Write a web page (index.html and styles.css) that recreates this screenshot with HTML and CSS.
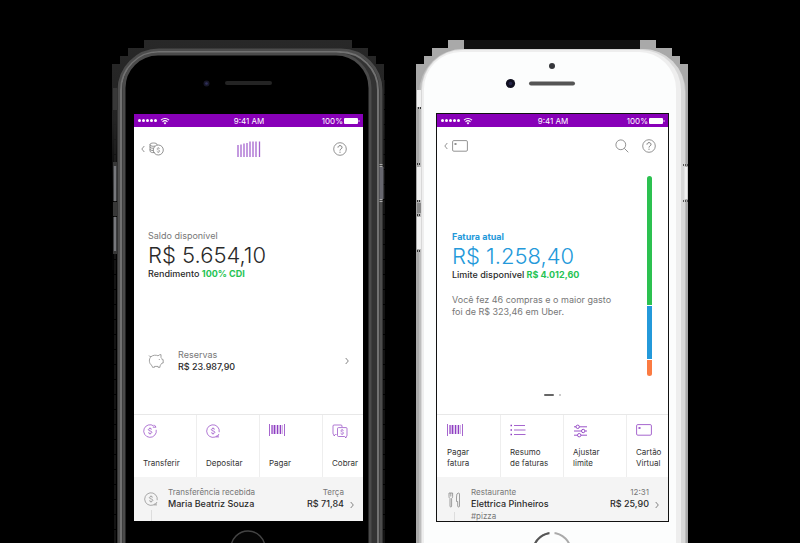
FILE: index.html
```html
<!DOCTYPE html>
<html lang="pt-BR">
<head>
<meta charset="utf-8">
<title>Conta e cartão</title>
<link rel="stylesheet" href="styles.css">
</head>
<body>
<svg class="defs" aria-hidden="true">
  <defs>
    <symbol id="wifi" viewBox="0 0 10 8"><path d="M1 3.2a5.7 5.7 0 0 1 8 0M2.5 4.8a3.6 3.6 0 0 1 5 0" fill="none" stroke="currentColor" stroke-width="1.1"/><path d="M3.6 6 5 7.5 6.4 6a2 2 0 0 0-2.8 0z" fill="currentColor"/></symbol>
    <symbol id="battery" viewBox="0 0 16 6"><rect width="14" height="6" rx="1" fill="currentColor"/><path d="M14.6 2v2q1 0 1-1t-1-1z" fill="currentColor"/></symbol>
    <symbol id="back" viewBox="0 0 4 8"><path d="M3.3 1 .8 4l2.500 3" fill="none" stroke="currentColor" stroke-width=".8"/></symbol>
    <symbol id="next" viewBox="0 0 4 8"><path d="M.7 1 3.300 4 .7 7" fill="none" stroke="currentColor" stroke-width=".9"/></symbol>
    <symbol id="help" viewBox="0 0 14 14"><circle cx="7" cy="7" r="6.300" fill="none" stroke="currentColor" stroke-width=".8"/><path d="M5 5.600c0-2.700 4-2.500 4-.2C9 7 7 6.900 7 8.500M7 9.700v1.100" fill="none" stroke="currentColor" stroke-width="1"/></symbol>
    <symbol id="dollar" viewBox="0 0 6 8"><path d="M4.900 2.500C4.500 1.300 1.300 1.300 1.300 2.700 1.300 4.200 4.900 3.600 4.900 5.300 4.900 6.700 1.500 6.700 1.100 5.400M3 .5v1.300M3 6.200v1.300" fill="none" stroke="currentColor" stroke-width=".7"/></symbol>
    <symbol id="barcode" viewBox="0 0 16 12"><path d="M.5 0v12M15.500 0v12" stroke="currentColor" stroke-width=".8"/><path d="M3 1v9M5.500 1v9M8.500 1v9M11.500 1v9" stroke="currentColor" stroke-width="1.200"/><path d="M4.100 1v9M6.800 1v9M10 1v9M13.300 1v9" stroke="currentColor" stroke-width=".5"/></symbol>
    <symbol id="card" viewBox="0 0 16 12"><rect x=".6" y=".6" width="14.800" height="10.600" rx="1.200" fill="none" stroke="currentColor" stroke-width=".8"/><path d="M2.500 3.200h2v1.600h-2z" fill="currentColor"/></symbol>
    <symbol id="deposit" viewBox="0 0 14 14"><path d="M11.600 11.400A6.300 6.300 0 1 1 13.200 8.200M9.800 12.900h3.200M12.900 10l-1.300 2.600" fill="none" stroke="currentColor" stroke-width=".7"/><use href="#dollar" x="4" y="3" width="6" height="8"/></symbol>
  </defs>
</svg>

<main class="stage">
  <section class="phone phone-dark" aria-label="Conta">
    <svg class="shell" viewBox="0 0 276 503" aria-hidden="true">
      <defs>
        <linearGradient id="fade" x1="0" y1="0" x2="0" y2="1"><stop offset="0" stop-color="#282828"/><stop offset=".35" stop-color="#222"/><stop offset=".65" stop-color="#030303"/></linearGradient>
      </defs>
      <path d="M32 0H240V8H256V16H264V24H272V230H0V24H8V16H16V8H32Z" fill="url(#fade)"/>
      <path d="M3 40V503M272 40V503" stroke="#262626" stroke-width="1" stroke-dasharray="14 1"/>
      <rect x="5" y="9" width="266" height="540" rx="42" fill="#1b1b1b"/>
      <rect x="7" y="10" width="262" height="540" rx="40" fill="#333" stroke="#4d4d4d" stroke-width="3"/>
      <rect x="9" y="12" width="257" height="540" rx="38" fill="none" stroke="#727272" stroke-width="2"/>
      <rect x="12" y="14" width="246" height="540" rx="34" fill="#000" stroke="#4b4b4b" stroke-width="3"/>
      <path d="M3 126v35M3 177v34" stroke="#77787c" stroke-width="3"/>
      <path d="M3 48v22M3 122v4M3 162v14M3 211v3" stroke="#383838" stroke-width="4"/>
      <path d="M269.500 127v32" stroke="#66666e" stroke-width="4"/>
      <path d="M269 124v3M269 159v3" stroke="#aaa" stroke-width="3" stroke-dasharray="1 1"/>
      <circle cx="94.500" cy="43.500" r="3" fill="#171728"/><circle cx="94.500" cy="43.500" r="1.300" fill="#30305c"/>
      <path d="M115 43h43" stroke="#242424" stroke-width="4" stroke-linecap="round"/>
      <circle cx="136" cy="508" r="17" fill="#050505" stroke="#444" stroke-width="1.500"/>
    </svg>
    <div class="screen">
      <div class="status">
        <span class="signal"><i></i><i></i><i></i><i></i><i></i><svg class="wifi"><use href="#wifi"/></svg></span>
        <span>9:41 AM</span>
        <span class="power">100%<svg class="battery"><use href="#battery"/></svg></span>
      </div>
      <header class="bar">
        <button class="icon-button" aria-label="Voltar"><svg class="chevron"><use href="#back"/></svg>
          <svg width="15" height="14" viewBox="0 0 15 14" fill="none" stroke="#777" stroke-width=".8"><path d="M5.500 10.500C3 11 1 10 1 9V2.500C1 .5 8 .5 8 2.500V3M1 2.500c0 2 4 2 5 1.500M1 4.700c0 1.300 2 1.600 3.400 1.500M1 7c0 1.200 1.500 1.500 3 1.500"/><circle cx="9.300" cy="8" r="5"/><use href="#dollar" x="6.800" y="4.800" width="5" height="6.500" color="#777"/></svg>
        </button>
        <svg class="bars" width="24" height="16" viewBox="0 0 24 16" aria-hidden="true"><path d="M1 4v12M4 3.500V16M7 2.500V16M10 2V16M13 .5V16M16 .5V16M19 .5V16M22.500.5V16" stroke="#a565cf" stroke-width="1.300"/></svg>
        <button class="icon-button" aria-label="Ajuda"><svg class="round"><use href="#help"/></svg></button>
      </header>
      <div class="balance">
        <p class="muted">Saldo disponível</p>
        <p class="amount">R$ 5.654,10</p>
        <p class="strong">Rendimento <b class="green">100% CDI</b></p>
      </div>
      <a class="reserve" href="#reservas">
        <svg width="16" height="16" viewBox="0 0 16 16" fill="none" stroke="#8a8a8a" stroke-width=".8" stroke-linejoin="round"><path d="M3 3.700Q1.500 3.800 1 2.500M3 3.700C5 2 8 1.800 10 2.800Q11.500 1.500 13 1.600V4.500Q14 5.500 14.200 6.700H15.200V10H14Q13.400 11.600 12 12.500V14.300H10V13.400H6.500V14.300H4.500L4 12.700C.8 10.500.6 6 3 3.700Z"/><path d="M11.300 6v1"/></svg>
        <span class="grow"><span class="muted">Reservas</span><span class="strong">R$ 23.987,90</span></span>
        <svg class="chevron"><use href="#next"/></svg>
      </a>
      <nav class="actions" aria-label="Ações da conta">
        <button><svg class="round" viewBox="0 0 14 14"><path d="M10.800 2A6.300 6.300 0 1 0 13.200 5.800M9.800 3.200h3.200M11.200.8l1.900 2.400" fill="none" stroke="currentColor" stroke-width=".7"/><use href="#dollar" x="4" y="3" width="6" height="8"/></svg><span>Transferir</span></button>
        <button><svg class="round"><use href="#deposit"/></svg><span>Depositar</span></button>
        <button><svg class="wide"><use href="#barcode"/></svg><span>Pagar</span></button>
        <button><svg width="16" height="15" viewBox="0 0 16 15" fill="none" stroke="currentColor" stroke-width=".7" stroke-linejoin="round"><path d="M4.500 10.500H3.500L2 12V10.500Q1 10.500 1 9.500V2Q1 1 2 1H9Q10 1 10 2V3"/><path d="M6.500 3.600H14Q15 3.600 15 4.600V11.500Q15 12.500 14 12.500V14L12.500 12.500H6.500Q5.500 12.500 5.500 11.500V4.600Q5.500 3.600 6.500 3.600Z"/><use href="#dollar" x="7.600" y="4.500" width="5" height="7"/></svg><span>Cobrar</span></button>
      </nav>
      <a class="entry" href="#transferencia">
        <span class="thread"><svg class="round"><use href="#deposit"/></svg></span>
        <span class="grow"><span class="muted">Transferência recebida</span><span class="strong">Maria Beatriz Souza</span></span>
        <span class="value"><span class="muted">Terça</span><span class="strong">R$ 71,84</span></span>
        <svg class="chevron"><use href="#next"/></svg>
      </a>
    </div>
  </section>

  <section class="phone phone-light" aria-label="Cartão">
    <svg class="shell" viewBox="0 0 276 503" aria-hidden="true">
      <path d="M32 0H240V8H256V16H264V24H272V503H0V24H8V16H16V8H32Z" fill="#a9a9a9"/>
      <path d="M48 0H224V9H48Z" fill="#111"/>
      <rect x="3" y="9" width="267" height="540" rx="44" fill="#bdbdbd"/>
      <rect x="5" y="9" width="264" height="540" rx="42" fill="#d8d8d8"/>
      <rect x="6" y="10" width="259" height="540" rx="40" fill="#eee"/>
      <rect x="8" y="12" width="252" height="540" rx="37" fill="#fcfdfd"/>
      <path d="M3 50v17M3 127v33M3 177v32" stroke="#f0f0f0" stroke-width="4"/>
      <path d="M2 68h3M1 124h4M1 161h4M1 175h4M1 211h4" stroke="#333" stroke-width="2" stroke-dasharray="1 1"/>
      <path d="M1 163h4v10H1z" fill="#888"/>
      <path d="M270 127v32" stroke="#f0f0f0" stroke-width="3"/>
      <path d="M267 125h5M267 161h5" stroke="#555" stroke-width="2" stroke-dasharray="1 1"/>
      <circle cx="136" cy="26" r="3" fill="#36373b"/>
      <circle cx="94.500" cy="43.500" r="4.600" fill="#101020"/><circle cx="94.500" cy="43.500" r="1.800" fill="#25254a"/>
      <path d="M115 43.500h42" stroke="#555" stroke-width="4" stroke-linecap="round"/>
      <circle cx="136" cy="512" r="19" fill="none" stroke="#aaa" stroke-width="2"/>
      <path d="M117.500 508A19 19 0 0 1 136 493" fill="none" stroke="#555" stroke-width="2"/>
      <path d="M136 491v4" stroke="#fcfdfd" stroke-width="5"/>
    </svg>
    <div class="screen">
      <div class="status">
        <span class="signal"><i></i><i></i><i></i><i></i><i></i><svg class="wifi"><use href="#wifi"/></svg></span>
        <span>9:41 AM</span>
        <span class="power">100%<svg class="battery"><use href="#battery"/></svg></span>
      </div>
      <header class="bar">
        <button class="icon-button" aria-label="Voltar"><svg class="chevron"><use href="#back"/></svg><svg class="wide"><use href="#card"/></svg></button>
        <span class="tools">
          <button class="icon-button" aria-label="Buscar"><svg class="round" viewBox="0 0 14 14" fill="none" stroke="currentColor" stroke-width=".8"><circle cx="5.800" cy="5.800" r="4.900"/><path d="m9.300 9.300 4 4"/></svg></button>
          <button class="icon-button" aria-label="Ajuda"><svg class="round"><use href="#help"/></svg></button>
        </span>
      </header>
      <div class="invoice">
        <div class="balance">
          <p class="blue"><b>Fatura atual</b></p>
          <p class="amount blue">R$ 1.258,40</p>
          <p class="strong">Limite disponível <b class="green">R$ 4.012,60</b></p>
          <p class="note">Você fez 46 compras e o maior gasto foi de R$ 323,46 em Uber.</p>
        </div>
        <div class="meter" aria-hidden="true"><i class="free"></i><i class="current"></i><i class="future"></i></div>
      </div>
      <div class="pager" aria-hidden="true"><i class="on"></i><i></i></div>
      <nav class="actions" aria-label="Ações do cartão">
        <button><svg class="wide"><use href="#barcode"/></svg><span>Pagar<br>fatura</span></button>
        <button><svg width="16" height="12" viewBox="0 0 16 12" stroke="currentColor"><path d="M4 1.500h11M4 6h11.500M4 10.500h11.500" stroke-width=".8"/><path d="M.5 1.500H2M.5 6H2M.5 10.500H2" stroke-width="1.400"/></svg><span>Resumo<br>de faturas</span></button>
        <button><svg width="15" height="14" viewBox="0 0 15 14" fill="none" stroke="currentColor" stroke-width=".9"><path d="M1 2.800h2M6.500 2.800H14M1 7h7.500M12 7h2M1 11.200h3.500M8 11.200h6"/><circle cx="4.700" cy="2.800" r="1.700"/><circle cx="10.200" cy="7" r="1.700"/><circle cx="6.200" cy="11.200" r="1.700"/></svg><span>Ajustar<br>limite</span></button>
        <button><svg class="wide"><use href="#card"/></svg><span>Cartão<br>Virtual</span></button>
      </nav>
      <a class="entry" href="#compra">
        <span class="thread"><svg width="14" height="16" viewBox="0 0 14 16" fill="none" stroke="currentColor" stroke-width=".8"><path d="M2 1v3.500Q2 6 3 6.500V14q0 1 .8 1t.8-1V6.500q1-.5 1-2V1M3.800 1v3.500M2 1h3.600M9.500 9.500V5Q9.500 1 11.200 1T12.500 3V14q0 1-.9 1t-.9-1V9.500z"/></svg></span>
        <span class="grow"><span class="muted">Restaurante</span><span class="strong">Elettrica Pinheiros</span><span class="muted">#pizza</span></span>
        <span class="value"><span class="muted">12:31</span><span class="strong">R$ 25,90</span></span>
        <svg class="chevron"><use href="#next"/></svg>
      </a>
    </div>
  </section>
</main>
</body>
</html>
```
FILE: styles.css
```css
* { box-sizing: border-box; }

body {
  margin: 0;
  background: #000;
  color: #2a2a2a;
  font: 9px/12px Inter, "Liberation Sans", sans-serif;
}

p { margin: 0; }
svg { display: block; flex: none; }
b { font-weight: 700; }
a { color: inherit; text-decoration: none; }

button {
  margin: 0;
  padding: 0;
  border: 0;
  background: none;
  color: inherit;
  font: inherit;
  text-align: left;
}

.defs { position: absolute; width: 0; height: 0; }

.stage {
  display: flex;
  justify-content: center;
  gap: 28px;
  min-height: 100vh;
  padding: 40px 0 0 4px;
}

.phone {
  position: relative;
  flex: 0 0 276px;
  min-width: 0;
  padding: 74px 25px 20px 22px;
}

.phone-light { padding: 73px 23px 20px 20px; }

.shell {
  position: absolute;
  inset: 0;
  width: 100%;
}

.screen {
  position: relative;
  overflow: hidden;
  background: #fff;
}

.phone-light .screen { border: 1px solid #111; }

.status {
  display: grid;
  grid-template-columns: 1fr auto 1fr;
  align-items: center;
  height: 13px;
  padding: 0 3px 0 4px;
  background: #8800b8;
  color: #fff;
  font-size: 8px;
}

.signal, .power { display: flex; align-items: center; gap: 1px; }
.power { justify-content: flex-end; }
.signal i { width: 3px; height: 3px; border-radius: 50%; background: #fff; }
.wifi { width: 10px; height: 8px; margin-left: 2px; }
.battery { width: 16px; height: 6px; }

.bar {
  display: flex;
  align-items: center;
  justify-content: space-between;
  height: 43px;
  padding: 0 16px 0 7px;
  color: #777;
}

.phone-light .bar { height: 38px; padding: 0 12px 0 7px; }
.icon-button { display: flex; align-items: center; gap: 4px; }
.tools { display: flex; gap: 13px; }
.chevron { width: 4px; height: 8px; color: #777; }
.round { width: 14px; height: 14px; }
.wide { width: 16px; height: 12px; }

.muted, .note { color: #777; }
.green { color: #25c353; }
.blue { color: #2499da; }
.amount { font-size: 22px; font-weight: 300; line-height: 26px; }

.phone-dark .balance { padding: 60px 14px 0; }

.reserve {
  display: flex;
  align-items: center;
  gap: 14px;
  padding: 69px 14px 41px;
}

.grow, .value { display: flex; flex-direction: column; }
.grow { flex: 1; }

.invoice {
  display: flex;
  justify-content: space-between;
  padding: 11px 16px 0 15px;
}

.invoice .balance { padding-top: 55px; }
.note { max-width: 168px; margin-top: 13px; }

.meter {
  display: flex;
  flex-direction: column;
  gap: 1px;
  flex: none;
  width: 5px;
  height: 200px;
  overflow: hidden;
  border-radius: 3px;
}

.free { flex: 129; background: #2cc150; }
.current { flex: 53; background: #2499da; }
.future { flex: 16; background: #fb7b42; }

.pager {
  display: flex;
  align-items: center;
  justify-content: center;
  gap: 5px;
  height: 38px;
}

.pager i { width: 2px; height: 2px; border-radius: 1px; background: #bbb; }
.pager .on { width: 10px; background: #666; }

.actions {
  display: grid;
  grid-template-columns: repeat(4, 63px);
  height: 63px;
  border-top: 1px solid #e8e8e8;
  color: #8f3fc2;
}

.phone-light .actions { padding-left: 1px; }

.actions button {
  display: flex;
  flex-direction: column;
  justify-content: space-between;
  padding: 9px 0 8px 9px;
  border-right: 1px solid #eee;
  font-size: 8px;
  line-height: 11px;
  white-space: nowrap;
}

.actions span { color: #333; }

.entry {
  display: flex;
  gap: 10px;
  height: 44px;
  padding: 9px 9px 0 10px;
  background: #f4f4f4;
}

.entry .muted { font-size: 8px; }
.strong { font-weight: 500; }
.value { text-align: right; }
.entry .grow, .entry .value { white-space: nowrap; }
.entry .chevron { margin: 15px 0 0 -4px; }

.thread {
  display: flex;
  flex-direction: column;
  align-items: center;
  gap: 4px;
  padding-top: 6px;
  color: #888;
}

.thread::after { content: ""; flex: 1; width: 1px; background: #ddd; }
```
